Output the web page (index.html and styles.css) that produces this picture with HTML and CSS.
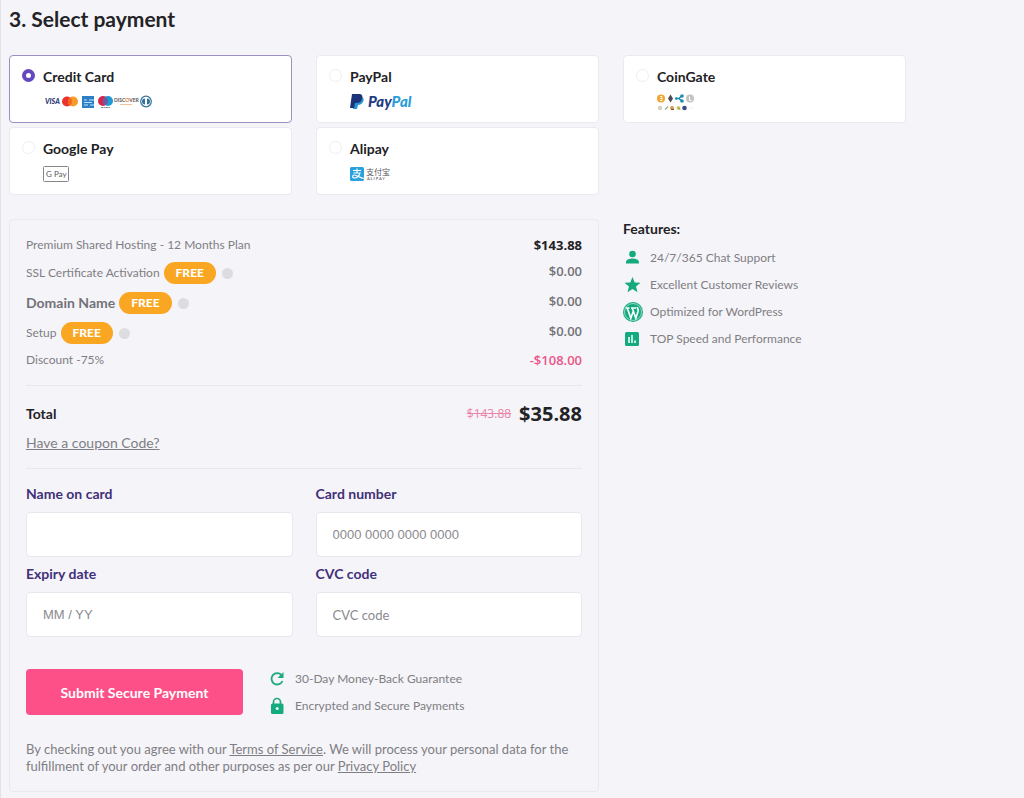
FILE: index.html
```html
<!DOCTYPE html>
<html lang="en">
<head>
<meta charset="utf-8">
<meta name="viewport" content="width=device-width, initial-scale=1">
<title>Select payment</title>
<link rel="stylesheet" href="styles.css">
</head>
<body>
<main class="page">
  <h1 class="title">3. Select payment</h1>
  <form class="checkout">
    <div class="methods" role="radiogroup" aria-label="Payment method">
      <label class="method">
        <input class="radio" type="radio" name="method" checked>
        <span class="method-name">Credit Card</span>
        <svg class="logo" width="110" height="16" viewBox="0 0 110 16" aria-hidden="true">
          <text x="2" y="10" font-size="7" font-weight="900" font-style="italic" fill="#2a3772">VISA</text>
          <circle cx="24" cy="7.500" r="5" fill="#e9352d"/><circle cx="30" cy="7.500" r="5" fill="#f79a2a"/><path d="M27 3.500a5 5 0 0 1 0 8a5 5 0 0 1 0-8z" fill="#f26722"/>
          <rect x="39" y="2" width="12" height="12" fill="#2c7fc4"/><path d="M41 6h3m2 0h5M41 8.500h8M41 11h4m2 0h4" stroke="#c2e0f5" stroke-width="1.100"/>
          <circle cx="60" cy="7" r="5" fill="#d7264c"/><circle cx="65" cy="7" r="5" fill="#1c9bd7"/><path d="M62.500 2.700a5 5 0 0 1 0 8.600a5 5 0 0 1 0-8.600z" fill="#6b5b9f"/><path d="M58 13.500h9" stroke="#7c8593" stroke-dasharray="2 .5"/>
          <text x="71" y="8" font-size="5" font-weight="700" fill="#5d5553">DISC<tspan fill="#ef7d2c">O</tspan>VER</text><path d="M77 10.500h12" stroke="#f4c29a"/>
          <circle cx="103" cy="7.500" r="5.300" fill="#fff" stroke="#327296" stroke-width="1.200"/><path d="M102 4.500v6a3 3 0 0 1 0-6zM104 4.500v6a3 3 0 0 0 0-6z" fill="#327296"/>
        </svg>
      </label>
      <label class="method">
        <input class="radio" type="radio" name="method">
        <span class="method-name">PayPal</span>
        <svg class="logo" width="66" height="16" viewBox="0 0 66 16" aria-hidden="true">
          <path d="M5 3h6c3 0 3 3 2 5s-3 3-5 3l-1 4H3z" fill="#2795d3"/>
          <path d="M2 0h7c3 0 4 2 3 5s-3 4-6 4H5l-1 5H0z" fill="#1c3578"/>
          <text x="18" y="13" font-size="15" font-weight="900" font-style="italic" fill="#213b80">Pay<tspan fill="#2b9cd8">Pal</tspan></text>
        </svg>
      </label>
      <label class="method">
        <input class="radio" type="radio" name="method">
        <span class="method-name">CoinGate</span>
        <svg class="logo" width="40" height="18" viewBox="0 0 40 18" aria-hidden="true">
          <circle cx="4" cy="4.500" r="4" fill="#f1a42f"/><path d="M3 2.500h2v4H3m0-2h2" stroke="#fff1d6" fill="none"/>
          <path d="M13.500 .5l2.500 4-2.500 4L11 4.500z" fill="#4a4b55"/>
          <path d="M18 4.500h4m0 0l3-3m-3 3l3 3" stroke="#1e8dae" stroke-width="1.500"/><circle cx="19.500" cy="4.500" r="1.300" fill="#1e8dae"/><circle cx="25" cy="2" r="1.800" fill="#1e8dae"/><circle cx="25" cy="7" r="1.800" fill="#1e8dae"/>
          <circle cx="33" cy="4.500" r="4" fill="#c3c3c3"/><path d="M32.500 2.500v4h2" stroke="#fff" fill="none"/>
          <circle cx="3" cy="14" r="1.800" fill="#ddd8c4" stroke="#b3b09d" stroke-width=".6"/><path d="M8 15.500l3-3" stroke="#9aa58d" stroke-width="1.300"/>
          <circle cx="15" cy="14" r="2" fill="#d69a4c"/><path d="M14 15.500h3" stroke="#6f5446"/><circle cx="21.500" cy="14" r="2" fill="#d8cf62"/><path d="M21 13.500l2 2" stroke="#657d4d"/><circle cx="27.500" cy="14" r="2.300" fill="#3e4b86"/><path d="M32 14h5" stroke="#eee"/>
        </svg>
      </label>
      <label class="method">
        <input class="radio" type="radio" name="method">
        <span class="method-name">Google Pay</span>
        <svg class="logo" width="26" height="16" viewBox="0 0 26 16" aria-hidden="true">
          <rect x=".5" y=".5" width="25" height="15" rx="1" fill="#fff" stroke="#85858b"/>
          <text x="3" y="11" font-size="8" fill="#5b5b5f">G Pay</text>
        </svg>
      </label>
      <label class="method">
        <input class="radio" type="radio" name="method">
        <span class="method-name">Alipay</span>
        <svg class="logo" width="42" height="16" viewBox="0 0 42 16" aria-hidden="true">
          <rect y="1" width="14" height="14" rx="1.500" fill="#2aa0dc"/>
          <path d="M3 4.500h8M7 2.500V7M3.500 7H10c-1 3-3 5-5.500 5s-2.500-3 0-3S10 12 14 12.500" fill="none" stroke="#fff" stroke-width="1.200"/>
          <text x="16" y="9" font-size="8" class="cjk" fill="#55565a">支付宝</text>
          <text x="17" y="14" font-size="4" font-weight="700" fill="#77787c">A L I P A Y</text>
        </svg>
      </label>
    </div>

    <section class="panel">
      <ul class="lines">
        <li class="line"><span>Premium Shared Hosting - 12 Months Plan</span><b class="price dark">$143.88</b></li>
        <li class="line tall"><span class="item">SSL Certificate Activation <em class="badge">FREE</em><i class="dot"></i></span><b class="price">$0.00</b></li>
        <li class="line tall"><span class="item"><strong class="domain">Domain Name</strong> <em class="badge">FREE</em><i class="dot"></i></span><b class="price">$0.00</b></li>
        <li class="line tall"><span class="item">Setup <em class="badge">FREE</em><i class="dot"></i></span><b class="price">$0.00</b></li>
        <li class="line short"><span>Discount -75%</span><b class="price pink">-$108.00</b></li>
      </ul>
      <div class="totals">
        <div class="total-row"><strong class="total-name">Total</strong><s class="old">$143.88</s><strong class="sum">$35.88</strong></div>
        <a class="coupon" href="#">Have a coupon Code?</a>
      </div>
      <div class="fields">
        <label class="field">Name on card<input class="box" type="text"></label>
        <label class="field">Card number<input class="box digits" type="text" placeholder="0000 0000 0000 0000"></label>
        <label class="field">Expiry date<input class="box digits" type="text" placeholder="MM / YY"></label>
        <label class="field">CVC code<input class="box" type="text" placeholder="CVC code"></label>
      </div>
      <div class="actions">
        <button class="submit" type="submit">Submit Secure Payment</button>
        <ul class="notes">
          <li class="note"><svg width="16" height="18" viewBox="0 0 16 18" aria-hidden="true"><path d="M12.500 5A5.700 5.700 0 1 0 13.500 11" fill="none" stroke="#1fa97e" stroke-width="1.800"/><path d="M14.500 2v6H8.500z" fill="#1fa97e"/></svg>30-Day Money-Back Guarantee</li>
          <li class="note"><svg width="16" height="18" viewBox="0 0 16 18" aria-hidden="true"><path d="M4.500 8V5a3.500 3.500 0 0 1 7 0v3" fill="none" stroke="#1fa97e" stroke-width="1.700"/><rect x="2" y="6.500" width="12.500" height="10.500" rx="1.500" fill="#14ab81"/><circle cx="8.200" cy="11.500" r="1.500" fill="#e5fff5"/></svg>Encrypted and Secure Payments</li>
        </ul>
      </div>
      <p class="terms">By checking out you agree with our <a href="#">Terms of Service</a>. We will process your personal data for the fulfillment of your order and other purposes as per our <a href="#">Privacy Policy</a></p>
    </section>

    <aside class="features">
      <h2 class="features-title">Features:</h2>
      <ul class="feature-list">
        <li class="feature"><svg width="20" height="20" viewBox="0 0 20 20" aria-hidden="true"><circle cx="9.500" cy="6" r="3.300" fill="#14a97e"/><path d="M3 15.500v-1.500c0-2.500 4-3.500 6.500-3.500s6.500 1 6.500 3.500v1.500z" fill="#14a97e"/></svg>24/7/365 Chat Support</li>
        <li class="feature"><svg width="20" height="20" viewBox="0 0 20 20" aria-hidden="true"><path d="M9.500 2l2.200 5.400 5.800.4-4.500 3.700 1.500 5.700-5-3.100-5 3.100 1.500-5.700L1.500 7.800l5.800-.4z" fill="#14a97e"/></svg>Excellent Customer Reviews</li>
        <li class="feature"><svg width="20" height="20" viewBox="0 0 20 20" aria-hidden="true"><circle cx="10" cy="10" r="10" fill="#14a97e"/><circle cx="10" cy="10" r="8.500" fill="none" stroke="#e8f7f2" stroke-width=".6"/><path d="M2.500 6h4M8 6h5M4.300 6.200l3.500 10 2.500-7M9.300 6.200l3.500 10 2.300-7c.6-2-.9-3-.9-4.200" fill="none" stroke="#f5fffb" stroke-width="1.700"/></svg>Optimized for WordPress</li>
        <li class="feature"><svg width="20" height="20" viewBox="0 0 20 20" aria-hidden="true"><rect x="2" y="3" width="14" height="14" rx="1.500" fill="#14a97e"/><path d="M6 8v6M9 6v8M12 11.500V14" stroke="#e8fff7" stroke-width="1.600"/></svg>TOP Speed and Performance</li>
      </ul>
    </aside>
  </form>
</main>
</body>
</html>
```
FILE: styles.css
```css
* { box-sizing: border-box; }
body {
  margin: 0;
  background: #f5f4f8;
  color: #7f7e84;
  font-family: Lato, "Open Sans", sans-serif;
  font-size: 12px;
  line-height: 16px;
}
ul { list-style: none; margin: 0; padding: 0; }
a { color: inherit; }
svg { display: block; flex: none; }
.cjk { font-family: "Noto Sans CJK SC", sans-serif; }
.page { padding: 6px 118px 6px 8px; border-left: 1px solid #e3e2e6; }
.title { margin: 0 0 23px; font-size: 21px; line-height: 26px; color: #232226; }
.checkout { display: grid; grid-template-columns: repeat(3, 1fr); column-gap: 24px; row-gap: 24px; }
.methods { grid-column: 1 / -1; display: grid; grid-template-columns: repeat(3, 1fr); gap: 4px 24px; }
.method {
  display: grid;
  grid-template-columns: 14px 1fr;
  grid-template-rows: 18px 16px;
  gap: 8px 7px;
  padding: 12px;
  background: #fff;
  border: 1px solid #ebeaf0;
  border-radius: 4px;
}
.method:has(:checked) { border-color: #9d8fc4; }
.radio {
  appearance: none;
  width: 13px;
  height: 13px;
  margin: 1px 0 0;
  border: 1px solid #eeedf0;
  border-radius: 50%;
  background: #fff;
}
.radio:checked { border: 4px solid #6548bd; }
.method-name { font-size: 14px; line-height: 18px; font-weight: 700; color: #222125; }
.logo { grid-column: 2; }
.panel { grid-column: span 2; padding: 11px 16px 16px; border: 1px solid #eae9ee; border-radius: 4px; }
.line { display: flex; align-items: center; justify-content: space-between; height: 27px; }
.line.tall { height: 30px; }
.line.short { height: 24px; }
.item { display: flex; align-items: center; gap: 4px; }
.badge {
  padding: 3px 12px;
  border-radius: 11px;
  background: #f9a622;
  color: #fff;
  font-size: 12px;
  font-style: normal;
  font-weight: 900;
}
.dot { width: 11px; height: 11px; margin-left: 2px; border-radius: 50%; background: #dddce0; }
.domain { font-size: 14px; color: #737278; }
.price { font-family: "Open Sans", sans-serif; font-size: 13px; font-weight: 600; color: #737278; }
.tall .price { padding-bottom: 4px; }
.price.dark { color: #232226; font-weight: 700; }
.price.pink { color: #e9578a; }
.totals { margin-top: 13px; padding: 14px 0 17px; border-top: 1px solid #e9e8ed; border-bottom: 1px solid #e9e8ed; }
.total-row { display: flex; align-items: center; height: 28px; }
.total-name { flex: 1; font-size: 14px; color: #232226; }
.old { margin-right: 8px; font-family: "Open Sans", sans-serif; color: #e985a8; }
.sum { font-family: "Open Sans", sans-serif; font-size: 20px; color: #232226; }
.coupon { display: block; width: max-content; margin-top: 7px; font-size: 14px; }
.fields { display: grid; grid-template-columns: 1fr 1fr; gap: 8px 23px; margin-top: 16px; }
.field { font-size: 14px; line-height: 18px; font-weight: 700; color: #42307a; }
.box {
  display: block;
  width: 100%;
  height: 45px;
  margin-top: 9px;
  padding: 0 16px;
  border: 1px solid #e8e7ed;
  border-radius: 4px;
  background: #fff;
  color: #555;
  font: 13px Lato, sans-serif;
}
.digits { font-family: "Liberation Sans", sans-serif; }
.box::placeholder { color: #8a898e; }
.actions { display: flex; align-items: center; gap: 26px; margin-top: 32px; }
.submit {
  width: 217px;
  height: 46px;
  border: 0;
  border-radius: 4px;
  background: #fd5088;
  color: #fff;
  font: 700 14px Lato, sans-serif;
}
.notes { display: grid; gap: 9px; }
.note { display: flex; align-items: center; gap: 10px; height: 18px; }
.terms { margin: 26px 0 0; font-size: 13px; line-height: 17px; }
.features-title { margin: 1px 0 10px; font-size: 14px; line-height: 18px; color: #232226; }
.feature-list { display: grid; gap: 7px; }
.feature { display: flex; align-items: center; gap: 7px; }
```
